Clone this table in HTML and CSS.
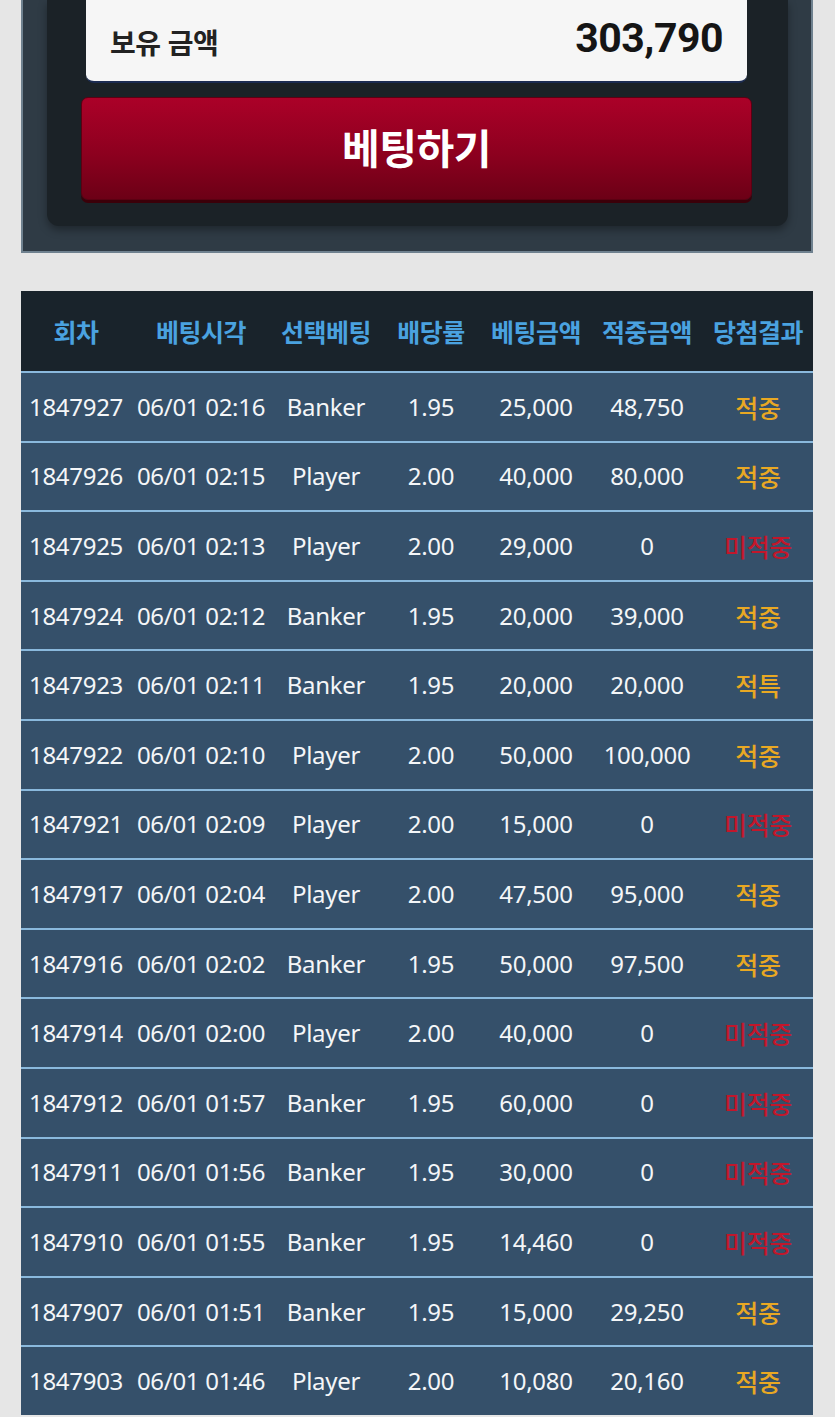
FILE: index.html
```html
<!DOCTYPE html>
<html lang="ko">
<head>
<meta charset="utf-8">
<link rel="stylesheet" href="styles.css">
</head>
<body>
<div class="page">
  <section class="panel">
    <div class="inner">
      <div class="balance">
        <span class="balance-label">보유 금액</span>
        <span class="balance-value">303,790</span>
      </div>
      <button class="bet-btn">베팅하기</button>
    </div>
  </section>

  <table class="history">
    <colgroup>
      <col class="c1"><col class="c2"><col class="c3"><col class="c4"><col class="c5"><col class="c6"><col class="c7">
    </colgroup>
    <thead>
      <tr><th>회차</th><th>베팅시각</th><th>선택베팅</th><th>배당률</th><th>베팅금액</th><th>적중금액</th><th>당첨결과</th></tr>
    </thead>
    <tbody>
      <tr><td>1847927</td><td>06/01 02:16</td><td>Banker</td><td>1.95</td><td>25,000</td><td>48,750</td><td class="win">적중</td></tr>
      <tr><td>1847926</td><td>06/01 02:15</td><td>Player</td><td>2.00</td><td>40,000</td><td>80,000</td><td class="win">적중</td></tr>
      <tr><td>1847925</td><td>06/01 02:13</td><td>Player</td><td>2.00</td><td>29,000</td><td>0</td><td class="lose">미적중</td></tr>
      <tr><td>1847924</td><td>06/01 02:12</td><td>Banker</td><td>1.95</td><td>20,000</td><td>39,000</td><td class="win">적중</td></tr>
      <tr><td>1847923</td><td>06/01 02:11</td><td>Banker</td><td>1.95</td><td>20,000</td><td>20,000</td><td class="win">적특</td></tr>
      <tr><td>1847922</td><td>06/01 02:10</td><td>Player</td><td>2.00</td><td>50,000</td><td>100,000</td><td class="win">적중</td></tr>
      <tr><td>1847921</td><td>06/01 02:09</td><td>Player</td><td>2.00</td><td>15,000</td><td>0</td><td class="lose">미적중</td></tr>
      <tr><td>1847917</td><td>06/01 02:04</td><td>Player</td><td>2.00</td><td>47,500</td><td>95,000</td><td class="win">적중</td></tr>
      <tr><td>1847916</td><td>06/01 02:02</td><td>Banker</td><td>1.95</td><td>50,000</td><td>97,500</td><td class="win">적중</td></tr>
      <tr><td>1847914</td><td>06/01 02:00</td><td>Player</td><td>2.00</td><td>40,000</td><td>0</td><td class="lose">미적중</td></tr>
      <tr><td>1847912</td><td>06/01 01:57</td><td>Banker</td><td>1.95</td><td>60,000</td><td>0</td><td class="lose">미적중</td></tr>
      <tr><td>1847911</td><td>06/01 01:56</td><td>Banker</td><td>1.95</td><td>30,000</td><td>0</td><td class="lose">미적중</td></tr>
      <tr><td>1847910</td><td>06/01 01:55</td><td>Banker</td><td>1.95</td><td>14,460</td><td>0</td><td class="lose">미적중</td></tr>
      <tr><td>1847907</td><td>06/01 01:51</td><td>Banker</td><td>1.95</td><td>15,000</td><td>29,250</td><td class="win">적중</td></tr>
      <tr><td>1847903</td><td>06/01 01:46</td><td>Player</td><td>2.00</td><td>10,080</td><td>20,160</td><td class="win">적중</td></tr>
    </tbody>
  </table>
</div>
</body>
</html>
```

FILE: styles.css
```css
html, body {
  margin: 0;
  padding: 0;
  background: #e6e6e6;
}
body {
  font-family: "Noto Sans", "Noto Sans CJK KR", sans-serif;
  overflow: hidden;
}
.page {
  padding: 0 22px 0 21px;
}
.panel {
  background: #2f3b45;
  border: 2px solid #6f818f;
  border-top: none;
  padding: 0 23px 25px 24px;
}
.inner {
  background: #1b2227;
  border-radius: 0 0 12px 12px;
  padding: 0 36px 26px 34px;
  box-shadow: 0 4px 8px rgba(0, 0, 0, 0.35);
}
.balance {
  margin: 0 5px 14px 5px;
  height: 81px;
  background: #f6f6f6;
  border-bottom: 2px solid #1c2c52;
  border-radius: 0 0 8px 8px;
  display: flex;
  align-items: center;
  justify-content: space-between;
  padding: 0 24px;
  box-sizing: content-box;
}
.balance-label {
  font-family: "Noto Sans CJK KR", sans-serif;
  font-weight: 700;
  font-size: 28px;
  color: #222;
  letter-spacing: -0.5px;
  padding-top: 2px;
}
.balance-value {
  font-family: Roboto, "Noto Sans", sans-serif;
  font-weight: 700;
  font-size: 41px;
  color: #151515;
  letter-spacing: -0.5px;
  margin-top: -6px;
}
.bet-btn {
  display: block;
  width: 100%;
  height: 103px;
  border: 1px solid #5c0012;
  border-radius: 7px;
  background: linear-gradient(to bottom, #ab0128 0%, #8d001f 55%, #6c0016 100%);
  box-shadow: 0 3px 0 #3b0009;
  color: #fff;
  font-family: "Noto Sans CJK KR", sans-serif;
  font-weight: 700;
  font-size: 41px;
  letter-spacing: -0.5px;
  cursor: pointer;
  padding: 0 0 6px 0;
}
.history {
  margin-top: 38px;
  width: 792px;
  border-collapse: collapse;
  table-layout: fixed;
}
.c1 { width: 110px; }
.c2 { width: 140px; }
.c3 { width: 110px; }
.c4 { width: 100px; }
.c5 { width: 110px; }
.c6 { width: 112px; }
.c7 { width: 110px; }
.history th {
  background: #19232b;
  color: #4aa2e0;
  font-family: "Noto Sans CJK KR", sans-serif;
  font-weight: 700;
  font-size: 25px;
  letter-spacing: -0.5px;
  height: 80px;
  padding: 0;
  white-space: nowrap;
  text-align: center;
}
.history td {
  background: #35506a;
  color: #f4f6f8;
  font-size: 24px;
  line-height: 30px;
  text-align: center;
  height: 67.6px;
  padding: 0;
  border-top: 2px solid #8ab9dd;
  white-space: nowrap;
  letter-spacing: -0.3px;
}
.history td.win {
  color: #e9a823;
  font-family: "Noto Sans CJK KR", sans-serif;
  font-weight: 500;
  font-size: 25px;
}
.history td.lose {
  color: #c2172b;
  font-family: "Noto Sans CJK KR", sans-serif;
  font-weight: 500;
  font-size: 25px;
}
```
